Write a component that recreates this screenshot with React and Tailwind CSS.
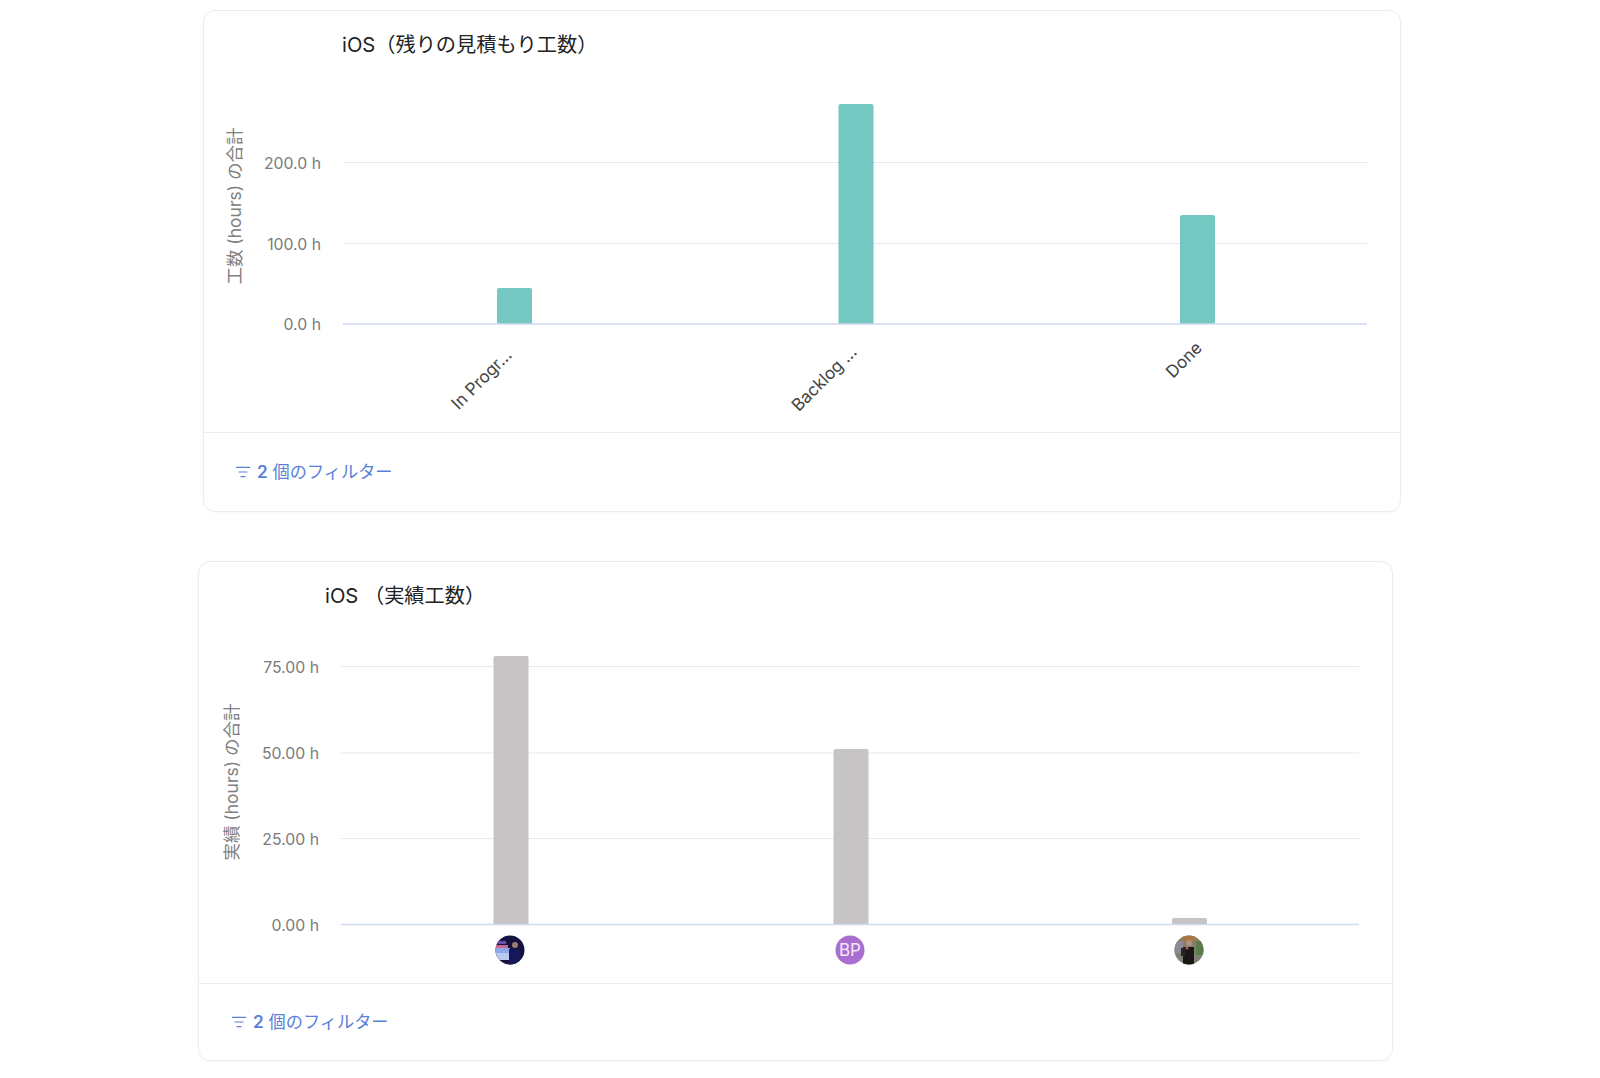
import { ListFilter } from 'lucide-react'

const charts = [
    {
        title: 'iOS（残りの見積もり工数）',
        yTitle: '工数 (hours) の合計',
        yTitleX: 241,
        yTitleY: 206,
        labelX: 321,
        gridX: [343, 1367],
        ticks: [
            { label: '200.0 h', y: 162.5 },
            { label: '100.0 h', y: 243.5 },
        ],
        zero: { label: '0.0 h', y: 324 },
        color: '#73c9c2',
        bars: [
            { x: 497, top: 288 },
            { x: 838.5, top: 104 },
            { x: 1180, top: 215 },
        ],
    },
    {
        title: 'iOS （実績工数）',
        yTitle: '実績 (hours) の合計',
        yTitleX: 238,
        yTitleY: 782,
        labelX: 319,
        gridX: [341, 1359],
        ticks: [
            { label: '75.00 h', y: 666.5 },
            { label: '50.00 h', y: 753 },
            { label: '25.00 h', y: 838.5 },
        ],
        zero: { label: '0.00 h', y: 924.5 },
        color: '#c6c4c4',
        bars: [
            { x: 493.5, top: 656 },
            { x: 833.5, top: 749 },
            { x: 1172, top: 918 },
        ],
    },
]

function barPath(x, top, bottom) {
    const w = 35
    return `M${x} ${bottom}V${top + 2}Q${x} ${top} ${x + 2} ${top}H${x + w - 2}Q${x + w} ${top} ${x + w} ${top + 2}V${bottom}Z`
}

function Bars({ chart }) {
    return (
        <>
            <text
                transform={`rotate(-90 ${chart.yTitleX} ${chart.yTitleY})`}
                x={chart.yTitleX}
                y={chart.yTitleY}
                textAnchor="middle"
                fontSize="17.5"
                fill="#808080"
            >
                {chart.yTitle}
            </text>
            {chart.ticks.map((t) => (
                <g key={t.label}>
                    <line x1={chart.gridX[0]} x2={chart.gridX[1]} y1={t.y} y2={t.y} stroke="#e8e9ee" />
                    <text x={chart.labelX} y={t.y + 6} textAnchor="end" fontSize="15.8" fill="#7b7b7b">
                        {t.label}
                    </text>
                </g>
            ))}
            <text x={chart.labelX} y={chart.zero.y + 6} textAnchor="end" fontSize="15.8" fill="#7b7b7b">
                {chart.zero.label}
            </text>
            {chart.bars.map((b) => (
                <path key={b.x} d={barPath(b.x, b.top, chart.zero.y)} fill={chart.color} />
            ))}
            <line x1={chart.gridX[0]} x2={chart.gridX[1]} y1={chart.zero.y} y2={chart.zero.y} stroke="#d0d9ef" strokeWidth="1.3" />
        </>
    )
}

function XLabel({ x, y, children }) {
    return (
        <text transform={`rotate(-45 ${x} ${y})`} x={x} y={y} textAnchor="end" fontSize="17" fill="#444444">
            {children}
        </text>
    )
}

function Avatars() {
    return (
        <>
            <defs>
                <clipPath id="av1">
                    <circle cx="510" cy="950" r="14.5" />
                </clipPath>
                <clipPath id="av3">
                    <circle cx="1189" cy="950" r="14.5" />
                </clipPath>
                <filter id="soft" x="-20%" y="-20%" width="140%" height="140%">
                    <feGaussianBlur stdDeviation="0.7" />
                </filter>
            </defs>
            <g clipPath="url(#av1)">
                <rect x="495" y="935" width="30" height="30" fill="#15123f" />
                <g filter="url(#soft)">
                    <rect x="495" y="945" width="13" height="3" fill="#c9688f" />
                    <rect x="495" y="948" width="15" height="9" fill="#8fa8ec" />
                    <rect x="495" y="953" width="14" height="7" fill="#b9c9f0" />
                    <rect x="498" y="941" width="8" height="3" fill="#6a4fa8" />
                    <circle cx="515" cy="945" r="3" fill="#9a7f70" />
                    <rect x="509" y="949" width="11" height="16" fill="#17135a" />
                </g>
            </g>
            <circle cx="850" cy="950" r="14.5" fill="#aa6dd0" />
            <text x="850" y="956" textAnchor="middle" fontSize="17" fill="#f3e8fa">
                BP
            </text>
            <g clipPath="url(#av3)">
                <rect x="1174" y="935" width="30" height="30" fill="#7d8270" />
                <g filter="url(#soft)">
                    <rect x="1174" y="941" width="9" height="12" fill="#8d8a96" />
                    <rect x="1196" y="941" width="9" height="14" fill="#5d7a4c" />
                    <ellipse cx="1189" cy="938.5" rx="8" ry="3.5" fill="#a8763f" />
                    <circle cx="1189" cy="943" r="3" fill="#b98d78" />
                    <rect x="1183" y="947" width="11" height="18" fill="#1a1817" />
                    <rect x="1181" y="948" width="4" height="8" fill="#2b2725" />
                    <circle cx="1187" cy="948" r="1.5" fill="#b3575a" />
                </g>
            </g>
        </>
    )
}

function FilterLink() {
    return (
        <a className="flex items-center text-[17.2px] leading-[24px] text-[#5a80d8]">
            <ListFilter size={16} strokeWidth={1.75} className="mr-[6px]" />
            <span>
                <span className="font-semibold">2</span> 個のフィルター
            </span>
        </a>
    )
}

export default function App() {
    const [first, second] = charts
    return (
        <div className="h-[1078px] overflow-hidden bg-white pt-[10px] font-['Inter','Noto_Sans_CJK_JP',sans-serif]">
            <div className="ml-[203px] w-[1198px] h-[502px] flex flex-col rounded-[12px] border border-[#ececec] shadow-[0_1px_2px_rgba(0,0,0,0.03)]">
                <div className="h-[46px] pl-[138px] pt-[22px] text-[20.2px] leading-[24px] text-[#222222]">{first.title}</div>
                <svg viewBox="204 57 1196 375" className="block w-[1196px] h-[375px]">
                    <Bars chart={first} />
                    <XLabel x={513} y={356}>In Progr…</XLabel>
                    <XLabel x={858} y={353}>Backlog …</XLabel>
                    <XLabel x={1203} y={349}>Done</XLabel>
                </svg>
                <div className="flex-1 flex items-center border-t border-[#ececec] pl-[31px]">
                    <FilterLink />
                </div>
            </div>
            <div className="ml-[198px] mt-[49px] w-[1195px] h-[500px] flex flex-col rounded-[12px] border border-[#ececec] shadow-[0_1px_2px_rgba(0,0,0,0.03)]">
                <div className="h-[46px] pl-[126px] pt-[22px] text-[20.2px] leading-[24px] text-[#222222]">{second.title}</div>
                <svg viewBox="199 608 1193 375" className="block w-[1193px] h-[375px]">
                    <Bars chart={second} />
                    <Avatars />
                </svg>
                <div className="flex-1 flex items-center border-t border-[#ececec] pl-[32px]">
                    <FilterLink />
                </div>
            </div>
        </div>
    )
}
